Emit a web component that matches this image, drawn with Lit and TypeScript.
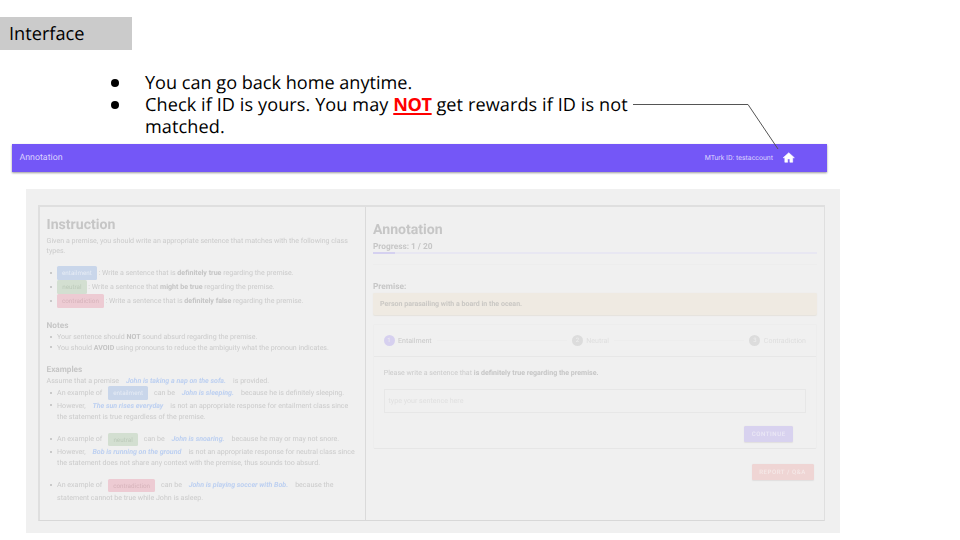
import { LitElement, html, css } from "lit";
import { customElement } from "lit/decorators.js";

@customElement("instruction-pane")
class InstructionPane extends LitElement {
  static styles = css`
    :host { display: block; box-sizing: border-box; padding: 9px 0 0 6.6px; color: #cbcbcb; font-size: 7.07px; white-space: nowrap; }
    h1 { margin: 0 0 2.75px; font-size: 14.1px; line-height: 18px; height: 16px; color: #c6c6c6; font-weight: 700; }
    h2 { margin: 0; font-size: 8.2px; line-height: 14px; height: 12px; color: #c6c6c6; font-weight: 700; }
    b { color: #c4c4c4; }
    .l { height: 10.5px; line-height: 11px; }
    .c { height: 14px; line-height: 14px; display: flex; white-space: pre; }
    .in { padding-left: 10.5px; }
    .dot { display: flex; white-space: pre; }
    .dot::before { content: ""; width: 2px; height: 2px; border-radius: 50%; background: #bdbdbd; margin: auto 5.2px auto 3.3px; flex: none; }
    .g1 { margin-top: 9.75px; } .g2 { margin-top: 11.5px; } .g3 { margin-top: 10.75px; }
    .s { margin-top: .25px; }
    i { color: #bdd0f1; font-weight: 700; margin: 0 7px 0 5px; }
    .chip { flex: none; height: 13.8px; line-height: 15px; margin-top: .5px; border-radius: 1.5px; text-align: center; font-size: 6.3px; }
    .e { width: 39.7px; background: #c9d6ea; color: #e6ecf5; }
    .n { width: 29.5px; background: #d3dfd1; color: #bccaba; }
    .x { width: 46.7px; background: #edcbd3; color: #d6b3bb; }
    .ex .chip { margin-left: 6px; margin-right: 6px; }
  `;
  render() {
    return html`
      <h1>Instruction</h1>
      <div class="l">Given a premise, you should write an appropriate sentence that matches with the following class</div>
      <div class="l">types.</div>
      <div class="c dot g1"><span class="chip e">entailment</span><span> : Write a sentence that is <b>definitely true</b> regarding the premise.</span></div>
      <div class="c dot"><span class="chip n">neutral</span><span> : Write a sentence that <b>might be true</b> regarding the premise.</span></div>
      <div class="c dot"><span class="chip x">contradiction</span><span> : Write a sentence that is <b>definitely false</b> regarding the premise.</span></div>
      <h2 class="g2">Notes</h2>
      <div class="l dot s"><span>Your sentence should <b>NOT</b> sound absurd regarding the premise.</span></div>
      <div class="l dot"><span>You should <b>AVOID</b> using pronouns to reduce the ambiguity what the pronoun indicates.</span></div>
      <h2 class="g3">Examples</h2>
      <div class="l s">Assume that a premise <i>John is taking a nap on the sofa.</i>is provided.</div>
      <div class="c dot ex"><span>An example of</span><span class="chip e">entailment</span><span>can be <i>John is sleeping.</i>because he is definitely sleeping.</span></div>
      <div class="l dot s"><span>However, <i>The sun rises everyday</i>is not an appropriate response for entailment class since</span></div>
      <div class="l in s">the statement is true regardless of the premise.</div>
      <div class="c dot ex g3"><span>An example of</span><span class="chip n">neutral</span><span>can be <i>John is snoaring.</i>because he may or may not snore.</span></div>
      <div class="l dot s"><span>However, <i>Bob is running on the ground</i>is not an appropriate response for neutral class since</span></div>
      <div class="l in">the statement does not share any context with the premise, thus sounds too absurd.</div>
      <div class="c dot ex g3"><span>An example of</span><span class="chip x">contradiction</span><span>can be <i>John is playing soccer with Bob.</i>because the</span></div>
      <div class="l in s">statement cannot be true while John is asleep.</div>
    `;
  }
}

@customElement("annotation-pane")
class AnnotationPane extends LitElement {
  static styles = css`
    :host { display: flex; flex-direction: column; box-sizing: border-box; padding: 14.2px 7px 0 7px; color: #cbcbcb; font-size: 7.05px; white-space: nowrap; }
    h1 { margin: 0; font-size: 14.1px; line-height: 18px; height: 16px; color: #c6c6c6; }
    h2 { margin: 0; font-size: 8.3px; line-height: 14px; height: 12px; color: #c6c6c6; }
    .progress { margin-top: 2.5px; }
    .track { height: 2px; margin-top: .2px; background: #e8e7f2; }
    .fill { width: 5%; height: 2px; background: #d5d1f0; }
    .rule { height: 1px; margin-top: 10.5px; background: #ededed; }
    .premise { margin-top: 15px; }
    .box { height: 22px; line-height: 22px; margin-top: .3px; padding-left: 7px; border-radius: 2px; background: #efeae2; font-weight: 700; color: #cac8c4; box-shadow: 0 .5px 1px #e5e2dc; }
    .card { margin-top: 9px; height: 125px; box-sizing: border-box; border: 1px solid #ededed; border-bottom-color: #e6e6e6; border-radius: 2px; }
    .steps { display: flex; align-items: center; height: 31px; padding: 0 10px 0 9.5px; border-bottom: 1.5px solid #e7e7e7; color: #dedede; }
    .num { width: 11px; height: 11px; line-height: 11px; border-radius: 50%; background: #dcdcdc; color: #eee; text-align: center; font-size: 6px; margin-right: 3.5px; }
    .on { background: #d6d0ef; }
    .act { color: #c8c8c8; }
    .line { flex: 1; height: 1px; background: #ededed; margin: 0 5px; }
    .ask { margin: 10.8px 0 0 9.7px; line-height: 11px; height: 10px; }
    b { color: #c6c6c6; }
    .input { margin: 11.2px 10px 0 9.5px; height: 24px; line-height: 24px; box-sizing: border-box; border: 1px solid #e7e7e7; padding-left: 4px; color: #e0e0e0; font-size: 7.1px; display: flex; align-items: center; }
    .btn { align-self: flex-end; height: 16px; line-height: 17px; border-radius: 1.5px; text-align: center; font-size: 6.1px; font-weight: 500; letter-spacing: .55px; box-shadow: 0 .5px 1px #e0dede; }
    .go { width: 49px; margin: 13.5px 22.8px 0 auto; background: #d8d2ef; color: #ebe8f5; }
    .rep { width: 62px; margin: 15.8px 3.5px 0 0; background: #efd5d4; color: #f5e9e8; }
  `;
  render() {
    return html`
      <h1>Annotation</h1>
      <h2 class="progress">Progress: 1 / 20</h2>
      <div class="track"><div class="fill"></div></div>
      <div class="rule"></div>
      <h2 class="premise">Premise:</h2>
      <div class="box">Person parasailing with a board in the ocean.</div>
      <div class="card">
        <div class="steps">
          <span class="num on">1</span><span class="act">Entailment</span><span class="line"></span>
          <span class="num">2</span><span>Neutral</span><span class="line"></span>
          <span class="num">3</span><span>Contradiction</span>
        </div>
        <div class="ask">Please write a sentence that <b>is definitely true regarding the premise.</b></div>
        <div class="input">type your sentence here</div>
        <div class="btn go">CONTINUE</div>
      </div>
      <div class="btn rep">REPORT / Q&amp;A</div>
    `;
  }
}

@customElement("app-root")
class AppRoot extends LitElement {
  static styles = css`
    :host { display: flex; flex-direction: column; align-items: flex-start; position: relative; width: 960px; height: 540px; overflow: hidden; background: #fff; font-family: Roboto, sans-serif; text-rendering: geometricPrecision; }
    .slide { font-family: "Trebuchet MS", "Open Sans", sans-serif; color: #000; }
    .title { margin-top: 17px; width: 131.5px; height: 32.5px; box-sizing: border-box; padding-left: 9px; line-height: 35px; background: #cbcbcb; font-size: 18.2px; }
    ul { margin: 20.5px 0 0 111px; padding: 0; list-style: none; font-size: 18.1px; line-height: 22px; width: 530px; height: 66px; white-space: nowrap; }
    li { display: flex; height: 22px; }
    li > span { padding-top: 1.5px; }
    li::before { content: ""; width: 8px; height: 8px; border-radius: 50%; background: #000; margin: 8.5px 26px 0 0; flex: none; }
    .not { color: #f00; font-weight: 700; text-decoration: underline; text-decoration-thickness: 2px; text-underline-offset: 2px; letter-spacing: -.4px; }
    .rest { letter-spacing: .09px; }
    .bar { margin: 7.5px 0 0 12px; width: 814.5px; height: 28px; box-sizing: border-box; padding: 0 31px 0 7.5px; display: flex; align-items: center; background: #7457f7; color: #dcd4ff; box-shadow: 0 1px 2px rgba(0,0,0,.4); font-size: 8.8px; }
    .bar span { padding-top: 1px; }
    .acct { margin-left: auto; margin-right: 9px; font-size: 7px; }
    .home { width: 13.5px; height: 13.5px; fill: #fff; }
    .canvas { margin: 17.5px 0 0 25.5px; width: 814.5px; height: 344px; box-sizing: border-box; padding: 16px 15px 12px 12.5px; background: #f0f0f0; }
    .frame { display: flex; height: 316px; box-sizing: border-box; border: 2px solid #dfdfdf; border-width: 2px 1.5px 1.5px 2px; border-bottom-color: #d8d8d8; filter: blur(.35px); }
    instruction-pane { width: 326px; border-right: 1.5px solid #dadada; }
    annotation-pane { flex: 1; }
    .callout { position: absolute; left: 0; top: 0; pointer-events: none; }
  `;
  render() {
    return html`
      <div class="slide title">Interface</div>
      <ul class="slide">
        <li><span>You can go back home anytime.</span></li>
        <li><span class="rest">Check if ID is yours. You may <span class="not">NOT</span> get rewards if ID is not<br />matched.</span></li>
      </ul>
      <div class="bar">
        <span>Annotation</span>
        <span class="acct">MTurk ID: testaccount</span>
        <svg class="home" viewBox="0 0 24 24"><path d="M10 20v-6h4v6h5v-8h3L12 3 2 12h3v8z" stroke="#fff" stroke-width="1" stroke-linejoin="round" /></svg>
      </div>
      <div class="canvas">
        <div class="frame">
          <instruction-pane></instruction-pane>
          <annotation-pane></annotation-pane>
        </div>
      </div>
      <svg class="callout" width="960" height="540"><path d="M633 104.5H748L778 149" fill="none" stroke="#555" stroke-width="1" /></svg>
    `;
  }
}
